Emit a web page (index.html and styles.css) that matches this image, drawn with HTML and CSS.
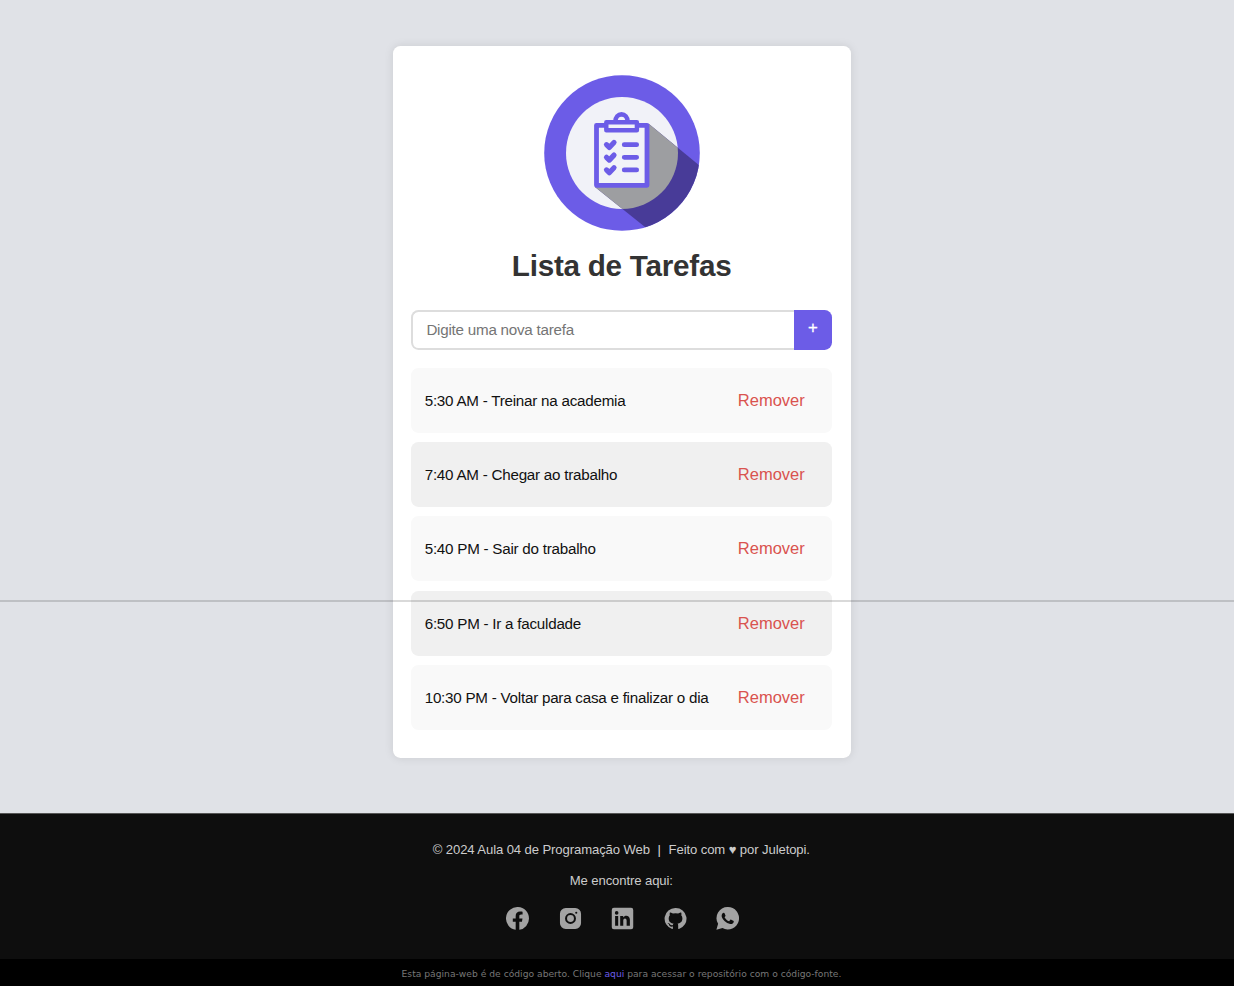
FILE: index.html
```html
<!DOCTYPE html>
<html lang="pt-BR">
<head>
<meta charset="utf-8">
<title>Lista de Tarefas</title>
<link rel="stylesheet" href="styles.css">
</head>
<body>
<main class="main">
  <section class="card">
    <svg class="logo" viewBox="0 0 156 156">
      <defs>
        <clipPath id="outer"><circle cx="78" cy="78" r="77.8"/></clipPath>
        <clipPath id="inner"><circle cx="78" cy="78" r="56"/></clipPath>
      </defs>
      <circle cx="78" cy="78" r="77.8" fill="#6c5ce7"/>
      <circle cx="78" cy="78" r="56" fill="#f1f2f8"/>
      <path clip-path="url(#outer)" d="M105 49L156 91V156H106L51 112Z" fill="#483b98"/>
      <path clip-path="url(#inner)" d="M105 49L156 91V156H106L51 112Z" fill="#9d9ea1"/>
      <rect x="52.5" y="50.3" width="50.5" height="60" fill="#f1f2f8" stroke="#6c5ce7" stroke-width="4.8" stroke-linejoin="round"/>
      <path d="M71.300 47C71.300 36.800 83.700 36.800 83.700 47" fill="none" stroke="#6c5ce7" stroke-width="4.600"/>
      <rect x="62.300" y="47.200" width="30.600" height="8" fill="#f1f2f8" stroke="#6c5ce7" stroke-width="4.400" stroke-linejoin="round"/>
      <g fill="none" stroke="#6c5ce7" stroke-width="5.200" stroke-linecap="round" stroke-linejoin="round">
        <path d="M62.500 69.700L65.300 72.500L70 67.500M62.500 82.300L65.300 85.100L70 80.100M62.500 94.900L65.300 97.700L70 92.700"/>
        <path stroke-width="4.700" d="M80.200 69.700H92.700M80.200 82.300H92.700M80.200 94.900H92.700"/>
      </g>
    </svg>
    <h1 class="title">Lista de Tarefas</h1>
    <form class="form">
      <input class="field" type="text" placeholder="Digite uma nova tarefa">
      <button class="add" type="button">+</button>
    </form>
    <ul class="list">
      <li class="item"><span>5:30 AM - Treinar na academia</span><button class="remove" type="button">Remover</button></li>
      <li class="item"><span>7:40 AM - Chegar ao trabalho</span><button class="remove" type="button">Remover</button></li>
      <li class="item"><span>5:40 PM - Sair do trabalho</span><button class="remove" type="button">Remover</button></li>
      <li class="item"><span>6:50 PM - Ir a faculdade</span><button class="remove" type="button">Remover</button></li>
      <li class="item"><span>10:30 PM - Voltar para casa e finalizar o dia</span><button class="remove" type="button">Remover</button></li>
    </ul>
  </section>
  <div class="rule"></div>
</main>
<footer class="footer">
  <p class="copy"><span>© 2024 Aula 04 de Programação Web</span><span class="bar">|</span><span>Feito com <span class="heart">♥</span> por Juletopi.</span></p>
  <p class="find">Me encontre aqui:</p>
  <nav class="social">
    <svg viewBox="0 0 24 24"><path d="M24 12A12 12 0 1 0 10.100 23.850V15.500H7.100V12H10.100V9.400C10.100 6.400 11.900 4.700 14.600 4.700C15.900 4.700 17.300 4.950 17.300 4.950V7.900H15.800C14.300 7.900 13.900 8.800 13.900 9.750V12H17.200L16.650 15.500H13.900V23.850A12 12 0 0 0 24 12Z"/></svg>
    <svg viewBox="0 0 24 24"><path fill-rule="evenodd" d="M7 1H17A6 6 0 0 1 23 7V17A6 6 0 0 1 17 23H7A6 6 0 0 1 1 17V7A6 6 0 0 1 7 1ZM12 6.300A5.700 5.700 0 1 0 12 17.700A5.700 5.700 0 1 0 12 6.300ZM12 8.400A3.600 3.600 0 1 1 12 15.600A3.600 3.600 0 1 1 12 8.400ZM18 4.900A1.100 1.100 0 1 0 18 7.100A1.100 1.100 0 1 0 18 4.900Z"/></svg>
    <svg viewBox="0 0 24 24"><path fill-rule="evenodd" d="M3 .8H21A2.200 2.200 0 0 1 23.200 3V21A2.200 2.200 0 0 1 21 23.200H3A2.200 2.200 0 0 1 .8 21V3A2.200 2.200 0 0 1 3 .8ZM4.300 9.400V19.500H7.500V9.400ZM5.900 4.300A1.900 1.900 0 1 0 5.900 8.100A1.900 1.900 0 1 0 5.900 4.300ZM9.600 9.400V19.500H12.800V14.200C12.800 11.200 16.300 11.100 16.300 14.200V19.500H19.700V13.300C19.700 8.700 14.700 8 12.700 10.900V9.400Z"/></svg>
    <svg viewBox="0 0 24 24"><path d="M12 1A11.200 11.200 0 0 0 8.500 22.900C9 23 9.300 22.700 9.300 22.400V20.400C6.200 21.100 5.500 19 5.500 19C5 17.700 4.300 17.300 4.300 17.300C3.300 16.600 4.400 16.600 4.400 16.600C5.500 16.700 6.100 17.800 6.100 17.800C7.100 19.500 8.700 19 9.300 18.700C9.400 18 9.700 17.500 10 17.200C7.500 16.900 4.900 16 4.900 11.700C4.900 10.500 5.400 9.500 6.100 8.700C6 8.400 5.600 7.300 6.200 5.700C6.200 5.700 7.100 5.400 9.300 6.900A10.500 10.500 0 0 1 14.800 6.900C17 5.400 17.900 5.700 17.900 5.700C18.500 7.300 18.100 8.400 18 8.700C18.700 9.500 19.200 10.500 19.200 11.700C19.200 16 16.600 16.900 14.100 17.200C14.500 17.600 14.800 18.200 14.800 19.300V22.400C14.800 22.700 15 23 15.600 22.900A11.200 11.200 0 0 0 12 1Z"/></svg>
    <svg viewBox="0 0 24 24"><path fill-rule="evenodd" d="M12.200 0A11.600 11.600 0 0 0 2.200 17.500L.4 23.700L6.800 22A11.700 11.700 0 1 0 12.200 0ZM8.200 6C8.700 6 8.800 6.200 9 6.700L9.900 8.800C10 9.200 9.900 9.500 8.900 10.600C10 12.700 11.600 14 13.700 14.900L15 13.400C15.300 13.100 15.500 13.100 15.900 13.300L18 14.300C18.500 14.600 18.600 14.700 18.500 15.300C18.300 17.200 16.300 18 14.800 17.700C10.700 17 6.200 12.500 5.900 9.600C5.800 7.800 6.700 6 8.200 6Z"/></svg>
  </nav>
</footer>
<div class="source">Esta página-web é de código aberto. Clique <a class="link">aqui</a> para acessar o repositório com o código-fonte.</div>
</body>
</html>
```
FILE: styles.css
```css
* { box-sizing: border-box; }
body {
  margin: 0;
  height: 986px;
  overflow: hidden;
  background: #e0e2e7;
  font-family: "Liberation Sans", Arial, sans-serif;
}
.main {
  position: relative;
  height: 812.5px;
  padding: 45.5px 0 0 392.6px;
}
.card {
  width: 458px;
  height: 712px;
  padding: 29.5px 18.500px 0;
  background: #fff;
  border-radius: 7.400px;
  box-shadow: 0 0 9.300px rgba(0, 0, 0, .1);
}
.logo { display: block; width: 156px; height: 156px; margin: 0 auto; }
.title {
  margin: 17px 0 27.200px;
  font-size: 29.670px;
  letter-spacing: -.25px;
  line-height: 35px;
  text-align: center;
  color: #333;
}
.form { display: flex; height: 39.800px; margin: 0 0 18px; }
.field {
  flex: 1;
  min-width: 0;
  padding: 0 14px 1px 13.300px;
  border: 2px solid #ddd;
  border-right: 0;
  border-radius: 7.400px 0 0 7.400px;
  font: 15.200px "Liberation Sans", Arial, sans-serif;
  letter-spacing: -.24px;
  background: #fff;
}
.field::placeholder { color: #757575; }
.add {
  width: 38.500px;
  padding: 0 0 4px;
  border: 0;
  border-radius: 0 7.400px 7.400px 0;
  background: #6c5ce7;
  color: #fff;
  font: 16.700px "Liberation Sans", Arial, sans-serif;
  -webkit-text-stroke: .3px #fff;
}
.list { display: grid; gap: 9.250px; margin: 0; padding: 0; list-style: none; }
.item {
  display: flex;
  align-items: center;
  justify-content: space-between;
  height: 65px;
  padding: 0 27.300px 0 13.600px;
  border-radius: 7.400px;
  background: #f9f9f9;
  color: #111;
  font-size: 15.200px;
  letter-spacing: -.24px;
}
.item:nth-child(even) { background: #f0f0f0; }
.remove {
  padding: 0;
  border: 0;
  background: none;
  color: #d9534f;
  font: 16.500px "Liberation Sans", Arial, sans-serif;
}
.rule {
  position: absolute;
  top: 600px;
  left: 0;
  width: 100%;
  height: 2px;
  background: rgba(0, 0, 0, .15);
}
.footer {
  height: 146px;
  padding: 28px 0 0 8.600px;
  border-top: 1px solid #555;
  background: #0e0e0e;
  color: #ccc;
  font-size: 13.100px;
  letter-spacing: -.1px;
  line-height: 16px;
  text-align: center;
}
.copy { display: flex; justify-content: center; margin: 0 0 15px; }
.bar { margin: 0 7.700px; color: #ddd; }
.heart { font-size: 13px; }
.find { margin: 0 0 18px; }
.social { display: flex; justify-content: center; gap: 29.600px; padding-left: 2.600px; }
.social svg { width: 23px; height: 23px; fill: #a3a3a3; }
.source {
  height: 28px;
  padding: 0 0 0 9px;
  background: #000;
  color: #777;
  font: 9.190px/29px "DejaVu Sans", Verdana, sans-serif;
  text-align: center;
}
.link { color: #6c5ce7; }
```
